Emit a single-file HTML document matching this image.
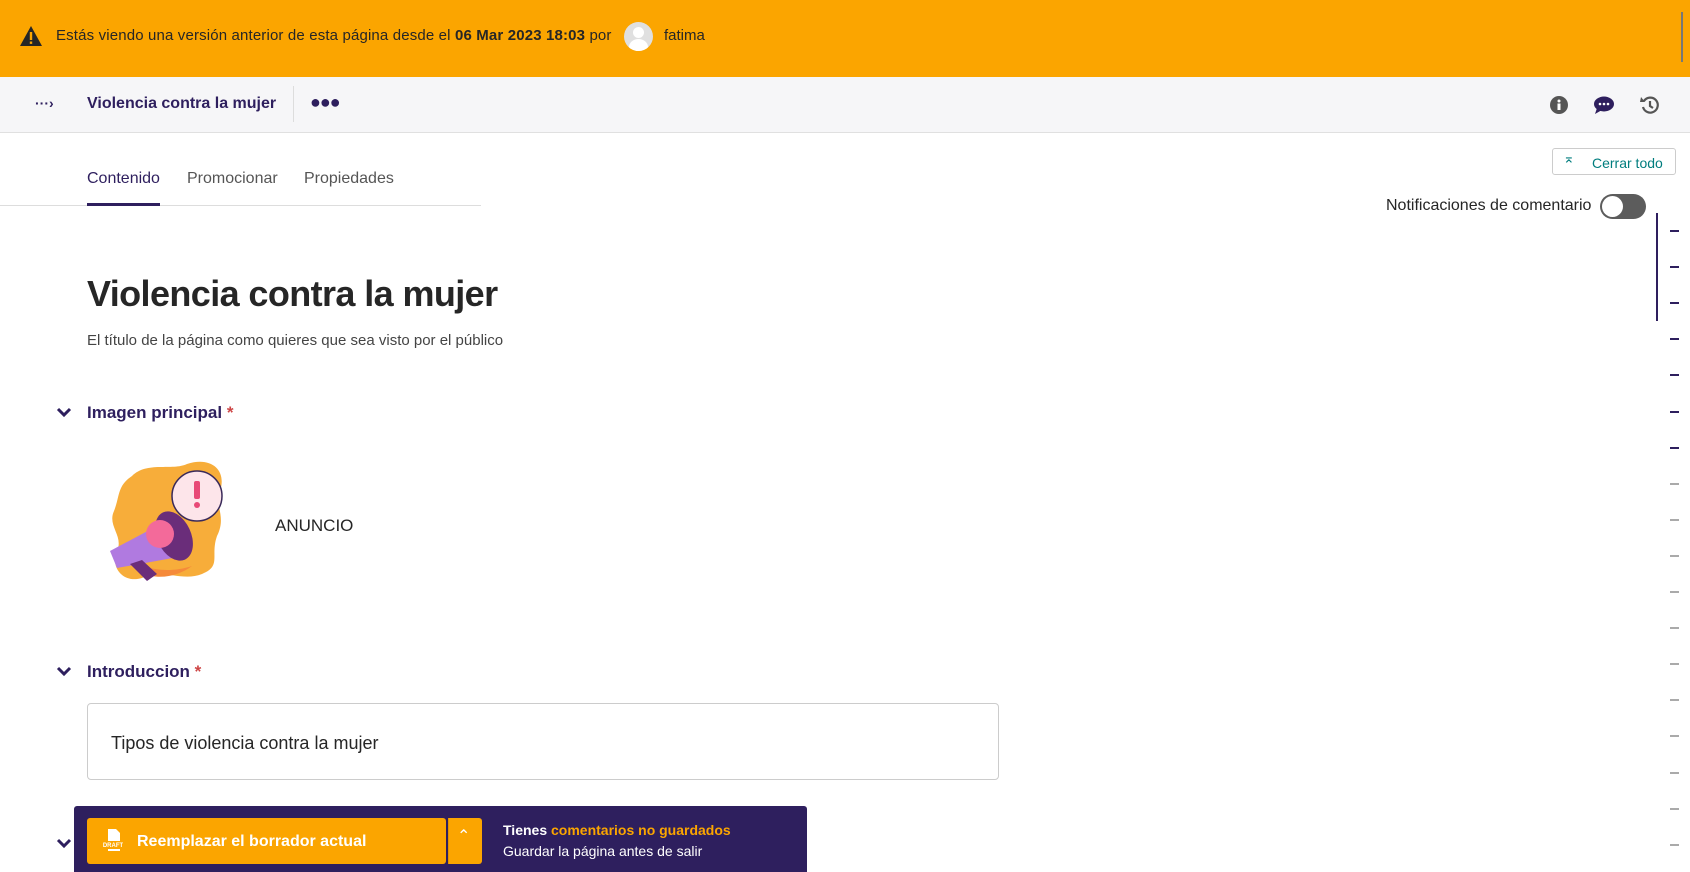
<!DOCTYPE html>
<html><head><meta charset="utf-8"><style>
*{box-sizing:border-box;margin:0;padding:0}
body{width:1690px;height:872px;overflow:hidden;background:#fff;font-family:"Liberation Sans",sans-serif;color:#262626;position:relative}
.abs{position:absolute}
</style></head><body>
<div class="abs" style="left:0;top:0;width:1690px;height:77px;background:#fba500"></div>
<svg class="abs" style="left:19px;top:25px" width="24" height="22" viewBox="0 0 24 22"><path d="M12 1 L23 21 H1 Z" fill="#262626"/><rect x="10.8" y="7" width="2.4" height="8" fill="#fba500"/><rect x="10.8" y="16.5" width="2.4" height="2.4" fill="#fba500"/></svg>
<div class="abs" style="left:56px;top:27px;font-size:15px;color:#262626;letter-spacing:0.15px">Estás viendo una versión anterior de esta página desde el <b>06 Mar 2023 18:03</b> por</div>
<div class="abs" style="left:624px;top:22px;width:29px;height:29px;border-radius:50%;background:#e0e0e0;overflow:hidden"><div class="abs" style="left:9px;top:5px;width:11px;height:11px;border-radius:50%;background:#fff"></div><div class="abs" style="left:5px;top:17px;width:19px;height:16px;border-radius:50%;background:#fff"></div></div>
<div class="abs" style="left:664px;top:27px;font-size:15px">fatima</div>
<div class="abs" style="left:1681px;top:12px;width:2px;height:50px;background:#777"></div>

<div class="abs" style="left:0;top:77px;width:1690px;height:56px;background:#f6f6f8;border-bottom:1px solid #e0e0e0"></div>
<div class="abs" style="left:35px;top:95px;font-size:14px;font-weight:bold;color:#2e1f5e">···›</div>
<div class="abs" style="left:87px;top:95px;font-size:16px;font-weight:bold;color:#2e1f5e">Violencia contra la mujer</div>
<div class="abs" style="left:293px;top:86px;width:1px;height:36px;background:#ddd"></div>
<div class="abs" style="left:310px;top:92px;font-size:18px;font-weight:bold;color:#2e1f5e;letter-spacing:-1px">●●●</div>
<svg class="abs" style="left:1550px;top:96px" width="18" height="18" viewBox="0 0 18 18"><circle cx="9" cy="9" r="9" fill="#555"/><circle cx="9" cy="5" r="1.5" fill="#fff"/><rect x="7.5" y="7.5" width="3" height="6.5" fill="#fff"/></svg>
<svg class="abs" style="left:1594px;top:96px" width="20" height="18" viewBox="0 0 20 18"><ellipse cx="10" cy="8" rx="10" ry="7.5" fill="#2e1f5e"/><path d="M3 12 L1 18 L8 14Z" fill="#2e1f5e"/><circle cx="6" cy="8" r="1.3" fill="#fff"/><circle cx="10" cy="8" r="1.3" fill="#fff"/><circle cx="14" cy="8" r="1.3" fill="#fff"/></svg>
<svg class="abs" style="left:1640px;top:95px" width="20" height="20" viewBox="0 0 20 20"><path d="M4 6 A7.5 7.5 0 1 1 3 12" fill="none" stroke="#555" stroke-width="2.2"/><path d="M1 2 L5 7 L0 7Z" fill="#555"/><path d="M10 6 V11 L13 13" fill="none" stroke="#555" stroke-width="2.2"/></svg>

<div class="abs" style="left:87px;top:170px;font-size:16px;color:#2e1f5e">Contenido</div>
<div class="abs" style="left:187px;top:170px;font-size:16px;color:#555">Promocionar</div>
<div class="abs" style="left:304px;top:170px;font-size:16px;color:#555">Propiedades</div>
<div class="abs" style="left:0;top:205px;width:481px;height:1px;background:#ddd"></div>
<div class="abs" style="left:87px;top:203px;width:73px;height:3px;background:#2e1f5e"></div>

<div class="abs" style="left:1552px;top:148px;width:124px;height:27px;border:1px solid #ccc;border-radius:3px"></div>
<div class="abs" style="left:1563px;top:150px;font-size:14px;color:#007d7e">⌅</div>
<div class="abs" style="left:1592px;top:155px;font-size:14px;color:#007d7e">Cerrar todo</div>
<div class="abs" style="left:1386px;top:197px;font-size:16px;color:#262626">Notificaciones de comentario</div>
<div class="abs" style="left:1600px;top:194px;width:46px;height:25px;border-radius:13px;background:#5c5c5c"><div class="abs" style="left:2px;top:2px;width:21px;height:21px;border-radius:50%;background:#fff"></div></div>
<div class="abs" style="left:1656px;top:213px;width:2px;height:108px;background:#2e1f5e"></div>

<div id="dashes"></div>

<div class="abs" style="left:87px;top:273px;font-size:36px;font-weight:bold;color:#262626;letter-spacing:-0.6px">Violencia contra la mujer</div>
<div class="abs" style="left:87px;top:332px;font-size:15px;color:#444">El título de la página como quieres que sea visto por el público</div>

<svg class="abs" style="left:56px;top:407px" width="16" height="12" viewBox="0 0 16 12"><path d="M2 2 L8 8 L14 2" fill="none" stroke="#2e1f5e" stroke-width="3"/></svg>
<div class="abs" style="left:87px;top:403px;font-size:17px;font-weight:bold;color:#2e1f5e">Imagen principal <span style="color:#cd4444">*</span></div>

<svg class="abs" style="left:102px;top:456px" width="132" height="128" viewBox="0 0 132 128">
<path d="M30 20 C45 5 70 15 85 8 C110 0 125 15 118 35 C112 50 125 60 115 80 C108 100 120 110 100 118 C80 126 60 112 40 122 C20 128 8 110 15 95 C22 80 5 70 12 55 C18 40 15 30 30 20Z" fill="#f7ad3a"/>
<path d="M20 95 C30 110 60 120 90 110 C70 125 35 128 20 95Z" fill="#f58a3a"/>
<circle cx="95" cy="40" r="25" fill="#fde5ea" stroke="#3a2a5a" stroke-width="1.5"/>
<rect x="92" y="25" width="6" height="18" rx="2" fill="#e84a77"/><circle cx="95" cy="49" r="3" fill="#e84a77"/>
<path d="M8 95 L70 62 L82 100 L15 112Z" fill="#b07ae0"/>
<ellipse cx="72" cy="80" rx="17" ry="26" transform="rotate(-25 72 80)" fill="#6a2d7a"/>
<circle cx="58" cy="78" r="14" fill="#f36a9a"/>
<path d="M28 108 L45 125 L55 118 L40 104Z" fill="#6a2d7a"/>
</svg>
<div class="abs" style="left:275px;top:516px;font-size:17px;color:#262626">ANUNCIO</div>

<svg class="abs" style="left:56px;top:666px" width="16" height="12" viewBox="0 0 16 12"><path d="M2 2 L8 8 L14 2" fill="none" stroke="#2e1f5e" stroke-width="3"/></svg>
<div class="abs" style="left:87px;top:662px;font-size:17px;font-weight:bold;color:#2e1f5e">Introduccion <span style="color:#cd4444">*</span></div>
<div class="abs" style="left:87px;top:703px;width:912px;height:77px;border:1px solid #ccc;border-radius:4px"></div>
<div class="abs" style="left:111px;top:733px;font-size:18px;color:#262626">Tipos de violencia contra la mujer</div>

<svg class="abs" style="left:56px;top:838px" width="16" height="12" viewBox="0 0 16 12"><path d="M2 2 L8 8 L14 2" fill="none" stroke="#2e1f5e" stroke-width="3"/></svg>
<div class="abs" style="left:74px;top:806px;width:733px;height:66px;background:#2e1f5e;border-radius:3px 3px 0 0"></div>
<div class="abs" style="left:87px;top:818px;width:359px;height:46px;background:#fba500;border-radius:3px"></div>
<div class="abs" style="left:448px;top:818px;width:0;height:46px;border-left:1px solid #e29500"></div>
<div class="abs" style="left:449px;top:818px;width:33px;height:46px;background:#fba500;border-radius:0 3px 3px 0"></div>
<div class="abs" style="left:457px;top:826px;font-size:16px;color:#fff">⌃</div>
<svg class="abs" style="left:103px;top:829px" width="20" height="24" viewBox="0 0 20 24"><path d="M5 0 H13 L17 4 V12 H5Z" fill="#fff"/><text x="10" y="18" font-size="6" font-family="Liberation Sans" font-weight="bold" fill="#fff" text-anchor="middle">DRAFT</text><rect x="5" y="20" width="12" height="2" fill="#fff"/></svg>
<div class="abs" style="left:137px;top:833px;font-size:16px;font-weight:bold;color:#fff">Reemplazar el borrador actual</div>
<div class="abs" style="left:503px;top:822px;font-size:14px;font-weight:bold;color:#fff">Tienes <span style="color:#fba500">comentarios no guardados</span></div>
<div class="abs" style="left:503px;top:843px;font-size:14px;color:#fff">Guardar la página antes de salir</div>

<script>
var h='';for(var i=0;i<18;i++){var y=230+i*36.1;h+='<div class="abs" style="left:1670px;top:'+Math.round(y)+'px;width:9px;height:2px;background:'+(i<7?'#2e1f5e':'#aaa')+'"></div>';}
document.getElementById('dashes').innerHTML=h;
</script>
</body></html>
